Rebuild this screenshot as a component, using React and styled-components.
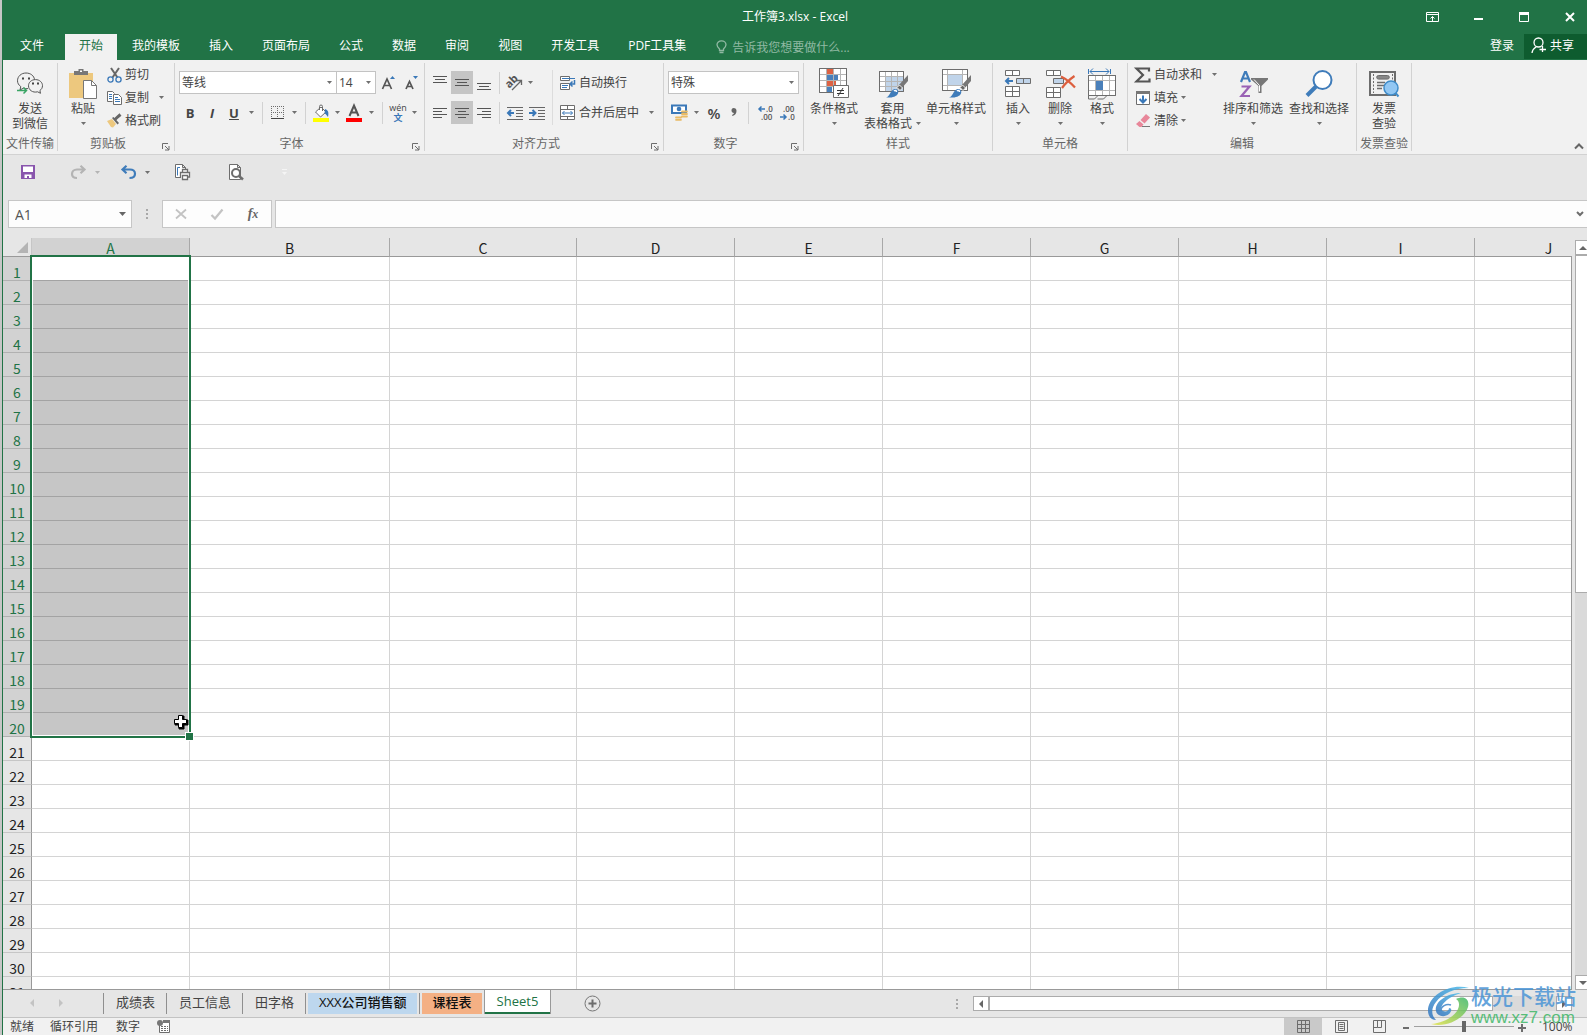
import styled, { createGlobalStyle } from "styled-components"

const GlobalStyle = createGlobalStyle`
  * {
    box-sizing: border-box;
  }
  body {
    margin: 0;
    font-family: "Open Sans", "Noto Sans CJK SC", sans-serif;
    font-size: 12px;
    color: #444;
    overflow: hidden;
  }
  button, select, input {
    font: inherit;
    color: inherit;
    border: 0;
    padding: 0;
    margin: 0;
    background: none;
    border-radius: 0;
  }
`

const Desktop = styled.div`
  height: 100vh;
  padding-left: 2px;
  background: #c6c6c6;
`

const Window = styled.div`
  position: relative;
  height: 100%;
  display: flex;
  flex-direction: column;
  overflow: hidden;
  background: #e6e6e6;
  border-left: 1px solid #217346;
`

/* title bar */

const TitleBar = styled.header`
  flex: none;
  height: 34px;
  display: grid;
  grid-template-columns: 1fr auto 1fr;
  align-items: center;
  background: #217346;
  color: #fff;
`

const Title = styled.h1`
  grid-column: 2;
  margin: 0;
  font-size: 12px;
  font-weight: 400;
  line-height: 34px;
`

const WindowButtons = styled.div`
  display: flex;
  justify-content: flex-end;
`

const WindowButton = styled.button`
  width: 46px;
  height: 32px;
  display: flex;
  align-items: center;
  justify-content: center;

  &:last-child {
    width: 40px;
    padding-left: 6px;
  }
`

/* tab strip */

const TabStrip = styled.nav`
  flex: none;
  height: 26px;
  display: flex;
  gap: 1px;
  background: #217346;
  color: #fff;
`

const Tab = styled.button`
  height: 26px;
  padding: 0 ${(p) => (p.$last ? 9 : 14)}px 2px 14px;
  line-height: 24px;
  white-space: nowrap;
  background: ${(p) => (p.$active ? "#f1f1f1" : "transparent")};
  color: ${(p) => (p.$active ? "#217346" : "#fff")};

  &:first-child {
    padding: 0 20px 2px 17px;
  }
`

const TellMe = styled.label`
  flex: 1;
  display: flex;
  align-items: center;
  gap: 5px;
  padding-left: 15px;

  input {
    width: 160px;
    height: 24px;
    outline: none;
  }
  input::placeholder {
    color: #90b9a3;
    opacity: 1;
  }
`

const Share = styled.button`
  height: 25px;
  padding: 0 13px 3px 7px;
  display: flex;
  align-items: center;
  gap: 4px;
  background: #0e5c2f;
  color: #fff;
`

/* ribbon */

const Ribbon = styled.div`
  flex: none;
  height: 95px;
  padding-top: 3px;
  display: flex;
  background: #f1f1f1;
  border-bottom: 1px solid #d2d2d2;
`

const GroupBox = styled.section`
  flex: none;
  width: ${(p) => p.$width}px;
  height: 88px;
  display: flex;
  flex-direction: column;
  border-right: 1px solid #d2d2d2;
`

const GroupBody = styled.div`
  height: 74px;
  display: flex;
  padding-left: ${(p) => p.$pad || 0}px;
`

const GroupLabel = styled.div`
  display: flex;
  line-height: 14px;
  color: #666;

  span {
    flex: 1;
    text-align: center;
    white-space: nowrap;
  }
`

const Launcher = styled.button`
  width: 16px;
  height: 14px;
  display: flex;
  align-items: flex-end;
  justify-content: center;
`

const BigButtonBox = styled.button`
  width: ${(p) => p.$width}px;
  padding-top: 3px;
  display: flex;
  flex-direction: column;
  align-items: center;
  line-height: 15px;
  white-space: nowrap;
`

const BigIcon = styled.span`
  height: 35px;
  display: flex;
  align-items: center;
`

const TextLine = styled.span`
  height: 15px;
  display: flex;
  align-items: center;
  gap: 4px;
`

const Stack = styled.div`
  display: flex;
  flex-direction: column;
`

const ToolRows = styled.div`
  display: flex;
  flex-direction: column;
  gap: 7px;
  padding-top: 8px;
`

const Row = styled.div`
  height: 23px;
  display: flex;
  align-items: center;
`

const SmallButton = styled.button`
  height: 23px;
  display: flex;
  align-items: center;
  gap: 3px;
  line-height: 22px;
  white-space: nowrap;
`

const ArrowButton = styled.button`
  width: ${(p) => p.$width || 12}px;
  height: 23px;
  margin-left: ${(p) => p.$gap || 0}px;
  display: flex;
  align-items: center;
  justify-content: center;
`

const Tool = styled.button`
  width: ${(p) => p.$width || 22}px;
  height: 23px;
  display: flex;
  align-items: center;
  justify-content: center;
  background: ${(p) => (p.$on ? "#c5c5c5" : "transparent")};
  font-size: ${(p) => p.$size || 13}px;
  font-weight: ${(p) => p.$weight || 700};
`

const Divider = styled.span`
  width: ${(p) => p.$width || 11}px;
  height: 22px;
  display: flex;
  justify-content: center;

  &::before {
    content: "";
    width: 1px;
    background: #d2d2d2;
  }
`

const AlignText = styled.div`
  height: 55px;
  margin: 7px 0 0 4px;
  padding: 1px 0 0 7px;
  display: flex;
  flex-direction: column;
  gap: 7px;
  border-left: 1px solid #dcdcdc;
`

const ComboBox = styled.span`
  position: relative;
  display: flex;
  width: ${(p) => p.$width}px;
  height: 23px;
  background: #fff;
  border: 1px solid #c3c3c3;

  & + & {
    border-left: 0;
  }
  select {
    flex: 1;
    padding-left: 2px;
    appearance: none;
    outline: none;
  }
  svg {
    position: absolute;
    right: 4px;
    top: 9px;
    pointer-events: none;
  }
`

const Pinyin = styled.span`
  display: flex;
  flex-direction: column;
  align-items: center;
  font-size: 9px;
  font-weight: 400;
  line-height: 10px;

  b {
    color: #3a78b8;
  }
`

const CollapseButton = styled.button`
  margin-left: auto;
  align-self: flex-end;
  width: 20px;
  height: 16px;
`

/* quick access toolbar and formula bar */

const QuickAccess = styled.div`
  flex: none;
  height: 34px;
  padding-left: 16px;
  display: flex;
  align-items: center;
`

const QuickButton = styled.button`
  height: 24px;
  min-width: ${(p) => p.$width}px;
  padding-left: 2px;
  display: flex;
  align-items: center;
  gap: 9px;
`

const FormulaBar = styled.div`
  flex: none;
  height: 28px;
  margin: 11px 0 10px;
  padding-left: 5px;
  display: flex;
  align-items: stretch;
  font-size: 14px;
`

const Field = styled.div`
  width: ${(p) => p.$width}px;
  flex: ${(p) => (p.$width ? "none" : 1)};
  display: flex;
  align-items: center;
  background: #fdfdfd;
  border: 1px solid #c6c6c6;
  border-right-width: ${(p) => (p.$width ? 1 : 0)}px;

  input {
    flex: 1;
    min-width: 0;
    padding-left: 6px;
    outline: none;
    color: #555;
  }
`

const FormulaButton = styled.button`
  flex: 1;
  height: 26px;
  display: flex;
  align-items: center;
  justify-content: center;
  font: italic bold 14px "Liberation Serif", serif;
  color: #666;

  small {
    font-size: 12px;
  }
`

const Dots = styled.span`
  width: ${(p) => p.$width}px;
  margin-left: ${(p) => (p.$push ? "auto" : 0)};
  display: flex;
  align-items: center;
  justify-content: center;
`

/* sheet */

const SheetArea = styled.main`
  flex: 1;
  min-height: 0;
  display: flex;
  gap: 3px;
`

const GridPane = styled.div`
  position: relative;
  flex: 1;
  min-width: 0;
  overflow: hidden;
  border-bottom: 1px solid #999;

  &::after {
    content: "";
    position: absolute;
    top: 18px;
    right: 0;
    bottom: 0;
    border-right: 1px solid #999;
  }
`

const Grid = styled.table`
  width: 1620px;
  table-layout: fixed;
  border-collapse: separate;
  border-spacing: 0;
  font-family: "Noto Sans CJK SC", sans-serif;
  font-size: 14px;
  color: #222;
  background: #fff;

  th {
    padding: 0;
    font-weight: 400;
    background: #e6e6e6;
  }
  td {
    height: 24px;
    padding: 0;
    border-right: 1px solid #d4d4d4;
    border-bottom: 1px solid #d4d4d4;
  }
`

const Corner = styled.th`
  height: 19px;
  border-right: 1px solid #c6c6c6;
  border-bottom: 1px solid #999;

  svg {
    margin-left: 14px;
  }
`

const ColHead = styled.th`
  height: 19px;
  line-height: 16px;
  border-right: 1px solid #a8a8a8;
  border-bottom: 1px solid #999;
  color: ${(p) => (p.$selected ? "#217346" : "#222")};

  && {
    padding-top: 2px;
    background: ${(p) => (p.$selected ? "#d2d2d2" : "#e6e6e6")};
  }
`

const RowHead = styled.th`
  height: 24px;
  line-height: 16px;
  vertical-align: bottom;
  border-right: 1px solid #999;
  border-bottom: 1px solid ${(p) => (p.$selected ? "#b1b1b1" : "#c6c6c6")};
  color: ${(p) => (p.$selected ? "#217346" : "#222")};

  && {
    background: ${(p) => (p.$selected ? "#d2d2d2" : "#e6e6e6")};
  }
`

const Cell = styled.td`
  background: ${(p) => (p.$selected ? "#c6c6c6" : "#fff")};

  && {
    border-bottom-color: ${(p) => (p.$ranged ? "#a3a3a3" : "#d4d4d4")};
  }
`

const Selection = styled.div`
  position: absolute;
  left: 27px;
  top: 17px;
  width: 161px;
  height: 483px;
  border: 2px solid #217346;
  box-shadow: inset 0 0 0 1px #fff;

  &::after {
    content: "";
    position: absolute;
    right: -5px;
    bottom: -5px;
    width: 7px;
    height: 7px;
    background: #217346;
    border: 1px solid #fff;
  }
  svg {
    position: absolute;
    right: 0;
    bottom: 6px;
    z-index: 1;
  }
`

const VerticalScroll = styled.div`
  flex: 0 0 12px;
  margin-top: 2px;
  display: flex;
  flex-direction: column;
  overflow: hidden;
  background: #dadada;
`

const ScrollButton = styled.button`
  flex: none;
  width: 16px;
  height: 15px;
  margin-top: ${(p) => (p.$bottom ? "auto" : 0)};
  display: flex;
  align-items: center;
  justify-content: center;
  background: #fff;
  border: 1px solid #ababab;
`

const VerticalThumb = styled.div`
  width: 16px;
  height: 45%;
  background: #fff;
  border: 1px solid #ababab;
`

/* sheet tabs and status bar */

const SheetBar = styled.footer`
  flex: none;
  height: 28px;
  display: flex;
  border-bottom: 1px solid #c3c3c3;
`

const SheetNav = styled.div`
  width: 100px;
  padding-left: 14px;
  display: flex;

  button {
    width: 29px;
    height: 26px;
    display: flex;
    align-items: center;
    justify-content: center;
  }
`

const SheetTab = styled.button`
  height: 21px;
  margin-top: 3px;
  padding: 0 11px 0 12px;
  display: flex;
  align-items: flex-start;
  line-height: 18px;
  font-size: 13px;
  white-space: nowrap;
  border-left: 1px solid #8f8f8f;
`

const ColorTab = styled(SheetTab)`
  padding: 0 2px;
  color: #111;
  font-weight: 500;

  span {
    display: block;
    height: 21px;
    padding: 0 10px 0 11px;
    background: ${(p) => p.$color};
  }
`

const ActiveTab = styled.button`
  height: 24px;
  padding: 0 12px 2px;
  line-height: 20px;
  font-size: 13px;
  color: #217346;
  background: #fff;
  border: solid #999;
  border-width: 0 1px;
  box-shadow: inset 0 -2px #217346;
`

const AddSheet = styled.button`
  margin-left: 33px;
  height: 26px;
  display: flex;
  align-items: center;
`

const HorizontalScroll = styled.div`
  width: 599px;
  height: 15px;
  margin: 6px 15px 0 0;
  display: flex;
  background: #dadada;
`

const HorizontalThumb = styled.div`
  width: 504px;
  margin-right: auto;
  background: #fff;
  border: 1px solid #ababab;
`

const StatusBar = styled.div`
  flex: none;
  height: 17px;
  padding-left: 7px;
  display: flex;
  align-items: center;
  background: #f1f1f1;
  line-height: 17px;
`

const StatusItem = styled.span`
  margin-right: ${(p) => p.$gap}px;
`

const ViewControls = styled.div`
  margin-left: auto;
  display: flex;
  align-items: center;
`

const ViewButton = styled.button`
  width: 38px;
  height: 17px;
  display: flex;
  align-items: center;
  justify-content: center;
  background: ${(p) => (p.$on ? "#c9c9c9" : "transparent")};
`

const ZoomButton = styled.button`
  width: 16px;
  height: 17px;
  display: flex;
  align-items: center;
  justify-content: center;
`

const ZoomSlider = styled.input`
  width: 100px;
  height: 12px;
  appearance: none;
  background: linear-gradient(#a0a0a0, #a0a0a0) center / 100% 1px no-repeat;

  &::-webkit-slider-thumb {
    appearance: none;
    width: 4px;
    height: 11px;
    background: #666;
  }
`

const ZoomValue = styled.span`
  width: 57px;
  padding-left: 12px;
`

const Watermark = styled.div`
  position: absolute;
  right: 11px;
  bottom: 8px;
  display: flex;
  align-items: center;
  gap: 2px;
  opacity: 0.85;
  pointer-events: none;

  p {
    margin: 0;
    font-size: 21px;
    font-weight: 500;
    line-height: 23px;
    color: #4b95d6;
  }
  p + p {
    font-family: "Liberation Sans", sans-serif;
    font-size: 17px;
    line-height: 19px;
    color: #3fb768;
  }
`

/* icons */

const Svg = styled.svg`
  display: block;
  flex: none;
  overflow: visible;
`

const Icon = ({ w = 16, h = 16, children }) => (
  <Svg width={w} height={h} viewBox={`0 0 ${w} ${h}`} fill="none" stroke="#6d6d6d" aria-hidden="true">
    {children}
  </Svg>
)

const Arrow = ({ color = "#707070" }) => (
  <Icon w={5} h={3}>
    <path d="M0 0h5L2.500 3z" fill={color} stroke="none" />
  </Icon>
)

const Lines = ({ rows, w = 14, h = 16 }) => (
  <Icon w={w} h={h}>
    {rows.map(([y, x1, x2]) => (
      <path key={y} d={`M${x1} ${y}.5H${x2}`} stroke="#555" />
    ))}
  </Icon>
)

const WeChatIcon = () => (
  <Icon w={28} h={26}>
    <path d="M12 17.6c-1.600 .3-3 .1-4.500-.5L4 19l.8-3.400C2.600 14 1.500 12 1.500 9.800 1.500 5.200 5.400 2 10 2s8 2.800 8.600 6.600" stroke="#555" />
    <path d="M19.500 8.600c4 0 7 2.700 7 6.100 0 2-1 3.700-2.600 4.800l.6 2.800-2.900-1.500c-5 1.300-9.100-1.900-9.100-6 0-3.500 3-6.200 7-6.200z" stroke="#555" />
    <path d="M6 7.500h2M12 7.500h2M16 12.500h2M21 12.500h2" stroke="#444" strokeWidth="2" />
    <path d="M1 19.500h9M7.500 16.500l3 3-3 3" stroke="#3aa565" strokeWidth="1.500" />
  </Icon>
)

const PasteIcon = () => (
  <Icon w={30} h={32}>
    <path d="M1 5h24v25H1z" fill="#edc87e" stroke="none" />
    <path d="M6 7V3h4.500V1h5v2H20v4z" fill="#777" stroke="none" />
    <path d="M12 2.500h2V4h-2z" fill="#fff" stroke="none" />
    <path d="M15.500 12.500h8l5 5v13h-13z" fill="#fff" stroke="#777" />
    <path d="M23.500 12.500v5h5" stroke="#777" />
  </Icon>
)

const CutIcon = () => (
  <Icon>
    <path d="M5 1l6.500 9.500M13 1L6.500 10.500" stroke="#666" strokeWidth="2" />
    <circle cx="4.500" cy="12.500" r="2.600" stroke="#3a78b8" strokeWidth="1.300" />
    <circle cx="12.500" cy="12.500" r="2.600" stroke="#3a78b8" strokeWidth="1.300" />
  </Icon>
)

const CopyIcon = () => (
  <Icon>
    <path d="M6.500 11.500h-5v-10h5l2 2" fill="#fff" />
    <path d="M3 4.500h3M3 6.500h3M3 8.500h3" stroke="#3a78b8" />
    <path d="M7.500 4.500h5l3 3v7h-8z" fill="#fff" />
    <path d="M9 7.500h3M9 9.500h5M9 11.500h5" stroke="#3a78b8" />
  </Icon>
)

const BrushIcon = () => (
  <Icon>
    <path d="M1 8l5-2 4 5-3 3.500L5 14z" fill="#edc87e" stroke="none" />
    <path d="M6 5l1.500-1 5.500 6-1.500 1.500z" fill="#666" stroke="none" />
    <path d="M9 6.500L11.500 4 14.500 1.500" stroke="#666" strokeWidth="3" />
  </Icon>
)

const BorderIcon = () => (
  <Icon w={14} h={14}>
    <path d="M.5 0v12M6.500 0v12M12.500 0v12M0 .5h13M0 6.500h13" strokeDasharray="1 1" />
    <path d="M0 12.500h13" stroke="#444" />
  </Icon>
)

const BucketIcon = () => (
  <Icon w={17} h={18}>
    <path d="M8 3l5 5-5.500 5L2.500 8z" fill="#fff" />
    <path d="M6.500 6V2.500a1.500 1.500 0 013 0V7" />
    <path d="M12 5c3 1 4 3 3 8-1-1.500-2-3-3.500-3.500z" fill="#3a78b8" stroke="none" />
    <path d="M0 14h16v4H0z" fill="#ffff00" stroke="none" />
  </Icon>
)

const FontColorIcon = () => (
  <Icon w={16} h={18}>
    <path d="M3.500 12L8 1.500 12.500 12M5 8.500h6" stroke="#555" strokeWidth="2" />
    <path d="M0 14h16v4H0z" fill="#ff0000" stroke="none" />
  </Icon>
)

const FontSizeIcon = ({ down }) => (
  <Icon w={14} h={16}>
    <path d={down ? "M2 14L5.500 6.500 9 14M3.500 11.500h4" : "M1.500 14L6 4l4.500 10M3 10.500h6"} stroke="#555" strokeWidth="1.700" />
    <path d={down ? "M9 1h5l-2.500 3z" : "M9 4h5l-2.500-3z"} fill="#3a78b8" stroke="none" />
  </Icon>
)

const OrientationIcon = () => (
  <Icon w={17}>
    <text x="0" y="10" transform="rotate(-45 6 8)" fontSize="11" fontWeight="700" fill="#555" stroke="none">ab</text>
    <path d="M6 15L15 6M11 5.500h4.500V10" stroke="#666" strokeWidth="1.300" />
  </Icon>
)

const IndentIcon = ({ right }) => (
  <Icon>
    <path d="M0 2.500h16M9 5.500h7M9 8.500h7M9 11.500h7M0 14.500h16" stroke="#666" />
    <path d={right ? "M0 8h6M3.500 5L6.500 8l-3 3" : "M1 8h6M4 5L1 8l3 3"} stroke="#3a78b8" strokeWidth="2" />
  </Icon>
)

const WrapIcon = () => (
  <Icon>
    <path d="M.5 1.500h9v4h-9zM.5 8.500h9v6h-9z" fill="#fff" />
    <path d="M2 3.500h13M2 10.500h6M2 12.500h5" stroke="#3a78b8" />
    <path d="M14.500 5v4h-4M12.500 6.500L10 9l2.500 2.500" stroke="#3a78b8" strokeWidth="1.500" />
  </Icon>
)

const MergeIcon = () => (
  <Icon>
    <path d="M.5 .5h14v14H.5zM.5 4.500h14M.5 11.500h14M7.500 .5v4M7.500 11.500v3" fill="#fff" />
    <path d="M2.500 8h10M4.500 6l-2 2 2 2M10.500 6l2 2-2 2" stroke="#3a78b8" />
  </Icon>
)

const MoneyIcon = () => (
  <Icon w={17} h={17}>
    <path d="M1 1.500h14v7.500H1z" fill="#fff" stroke="#3a78b8" strokeWidth="2" />
    <circle cx="8" cy="5" r="2.300" fill="#3a78b8" stroke="none" />
    <path d="M11 7.500h5M11 10h5M11 12.500h5M5 13.500h5M5 15.800h5" stroke="#e9bb66" strokeWidth="1.800" strokeLinecap="round" />
  </Icon>
)

const CommaIcon = () => (
  <Icon w={6} h={9}>
    <path d="M2.500 0C4.500 0 5.500 1.200 5.500 3c0 2.500-1.500 4.500-4 5l-.5-1c1.200-.5 1.800-1.200 2-2C1.500 5 .5 4 .5 2.500 .5 1 1.300 0 2.500 0z" fill="#666" stroke="none" />
  </Icon>
)

const DecimalIcon = ({ less }) => (
  <Icon>
    <text x={less ? 3 : 8} y="7" fontSize="8" fontWeight="600" fill="#555" stroke="none">{less ? ".00" : ".0"}</text>
    <text x={less ? 8 : 3} y="15" fontSize="8" fontWeight="600" fill="#555" stroke="none">{less ? ".0" : ".00"}</text>
    <path d={less ? "M0 12h6M3.500 9.500L6 12l-2.500 2.500" : "M1 4h6M3.500 1.500L1 4l2.500 2.500"} stroke="#3a78b8" strokeWidth="1.500" />
  </Icon>
)

const ConditionalIcon = () => (
  <Icon w={31} h={31}>
    <path d="M.5 .5h27v24H.5z" fill="#fff" />
    <path d="M8 1h6v5H8zM8 13h9v5H8z" fill="#dd6243" stroke="none" />
    <path d="M8 7h11v5H8zM8 19h5v5H8z" fill="#4a80ba" stroke="none" />
    <path d="M7.500 .5v24M14.500 .5v24M21.500 .5v24M.5 6.500h27M.5 12.500h27M.5 18.500h27" stroke="#b5b5b5" />
    <path d="M.5 .5h27v24H.5z" />
    <path d="M14.500 17.500h15v12h-15z" fill="#fff" />
    <path d="M18 22.500h7M18 25.500h7M24 20l-5 8" stroke="#333" />
  </Icon>
)

const PaintOverlay = () => (
  <>
    <path d="M29 6v6l-7 8-3-3z" fill="#777" stroke="none" />
    <path d="M20.500 16l3 3-2.500 2.500-3-3z" fill="#666" stroke="#f1f1f1" />
    <path d="M7 28.500c4-1 4-7 8.500-8.500 3-.5 4.500 2 3.500 4.500-1.500 3.500-7 4.500-12 4z" fill="#3f7cba" stroke="none" />
    <path d="M15 22c1-1 2.500-.5 2.500 1" stroke="#fff" strokeWidth="1.500" />
  </>
)

const TableFormatIcon = () => (
  <Icon w={28} h={30}>
    <path d="M.5 2.500h24v20H.5z" fill="#fff" />
    <path d="M6 7h18v15H6z" fill="#c0d4ea" stroke="none" />
    <path d="M6.500 2.500v20M12.500 2.500v20M18.500 2.500v20M.5 7.500h24M.5 12.500h24M.5 17.500h24" stroke="#b5b5b5" />
    <path d="M.5 2.500h24v20H.5z" />
    <PaintOverlay />
  </Icon>
)

const CellStyleIcon = () => (
  <Icon w={28} h={30}>
    <path d="M.5 .5h25v21H.5z" fill="#fff" />
    <path d="M5.500 .5v21M20.500 .5v21M.5 5.500h25M.5 16.500h25" stroke="#b5b5b5" />
    <path d="M6 6h14v10H6z" fill="#c0d4ea" stroke="none" />
    <path d="M.5 .5h25v21H.5z" />
    <PaintOverlay />
  </Icon>
)

const InsertIcon = () => (
  <Icon w={28} h={30}>
    <path d="M1.500 1.500h14v5h-14zM8.500 1.500v5M1.500 17.500h14v10h-14zM1.500 22.500h14M8.500 17.500v10" fill="#fff" />
    <path d="M12.500 9.500h14v5h-14zM19.500 9.500v5" fill="#c0d4ea" />
    <path d="M2 12h7M5 9l-3 3 3 3" stroke="#3a78b8" strokeWidth="2" />
  </Icon>
)

const DeleteIcon = () => (
  <Icon w={28} h={30}>
    <path d="M.5 1.500h14v5H.5zM7.500 1.500v5M.5 18.500h14v10H.5zM.5 23.500h14M7.500 18.500v10" fill="#fff" />
    <path d="M7.500 9.500h10v5h-10z" fill="#c0d4ea" />
    <path d="M15 7.500c5 2.500 9.500 6 14 11M28.500 7c-5 3.500-9 7-12.500 12" stroke="#dd5f3e" strokeWidth="2.200" />
  </Icon>
)

const FormatIcon = () => (
  <Icon w={30} h={32}>
    <path d="M1.500 1v5M23.500 1v5M3 3.500h19M6 .5l-3 3 3 3M19 .5l3 3-3 3" stroke="#3a78b8" />
    <path d="M1.500 7.500h27v20h-27z" fill="#fff" />
    <path d="M8.500 7.500v20M15.500 7.500v20M22.500 7.500v20M1.500 12.500h27M1.500 22.500h27" stroke="#b5b5b5" />
    <path d="M9 13h7v9H9z" fill="#4a80ba" stroke="none" />
    <path d="M1.500 7.500h27v20h-27zM1.500 28v3h6l3-3M10.500 31h6l3-3" />
  </Icon>
)

const SumIcon = () => (
  <Icon>
    <path d="M14 4.500V1.500H1.500L8 8l-6.500 6.500H14.500v-3" stroke="#555" strokeWidth="2.200" />
  </Icon>
)

const FillIcon = () => (
  <Icon>
    <path d="M1.500 1.500h13v13h-13z" fill="#fff" />
    <path d="M1 1h14v3H1z" fill="#777" stroke="none" />
    <path d="M8 5.500v7M4.500 9L8 12.500 11.500 9" stroke="#3a78b8" strokeWidth="2" />
  </Icon>
)

const EraserIcon = () => (
  <Icon>
    <path d="M5.500 7L11 1l4 3.500L9.500 10.500z" fill="#e8879a" stroke="none" />
    <path d="M4.500 8l4 3.500L6.500 14h-2L1 11z" fill="#e8879a" stroke="none" />
    <path d="M7 13.500h8" stroke="#777" />
  </Icon>
)

const SortIcon = () => (
  <Icon w={28} h={30}>
    <path d="M2 13L6 3h1l4 10M3.500 9.500h6" stroke="#3f7cba" strokeWidth="2.200" />
    <path d="M2.500 17.500h8L2.500 27h8.500" stroke="#9a62b5" strokeWidth="2.200" />
    <path d="M12 9h17v1.500L22.500 17v7h-3v-7L12 10.500z" fill="#777" stroke="none" />
    <path d="M15 10.500l5.500 6v6" stroke="#fff" />
  </Icon>
)

const FindIcon = () => (
  <Icon w={28} h={30}>
    <circle cx="17.500" cy="11" r="9" fill="#fff" stroke="#3f7cba" strokeWidth="2" />
    <path d="M11 17.500L2 26.500" stroke="#3f7cba" strokeWidth="4" />
  </Icon>
)

const InvoiceIcon = () => (
  <Icon w={32} h={28}>
    <path d="M2 2h25v23H2z" strokeWidth="2" />
    <path d="M5.500 4v19M24.500 4v8" strokeDasharray="2 1.500" />
    <path d="M9 12.500h8M9 15.500h8M9 18.500h5" strokeWidth="1.500" />
    <path d="M10.500 5.500h9a1.800 1.800 0 010 3.600h-9a1.800 1.800 0 010-3.600z" fill="#888" />
    <circle cx="23" cy="18" r="7" fill="#92c7f3" stroke="#3f8cc9" strokeWidth="1.500" />
    <path d="M27.500 23l3 3.500" stroke="#3f8cc9" strokeWidth="2" />
  </Icon>
)

const LauncherIcon = () => (
  <Icon w={8} h={8}>
    <path d="M.5 6V.5H6" />
    <path d="M3 3l4 4M7 3v4H3" />
  </Icon>
)

const SaveIcon = () => (
  <Icon w={14} h={14}>
    <path d="M0 0h14v14H0z" fill="#8955ad" stroke="none" />
    <path d="M2 1.500h10V7H2zM3.500 9.500h7V13H8v-2H6v2H3.500z" fill="#fff" stroke="none" />
  </Icon>
)

const TurnIcon = ({ redo }) => (
  <Icon w={15} h={14}>
    <path
      d={redo ? "M13 4.500H6C3 4.500 1 6.500 1 9s2 4 5 4M9.500 .8l4 3.700-4 3.700" : "M2 4.500h7c3 0 5 1.800 5 4.200S12 13 8.500 13M5.500 .8l-4 3.700 4 3.700"}
      stroke={redo ? "#b4b4b4" : "#3f7cba"}
      strokeWidth="2.200"
    />
  </Icon>
)

const PrintIcon = () => (
  <Icon w={17}>
    <path d="M7 13.500H1.500V.5h7l3 3V5M8.500 .5v3h3" fill="#fff" />
    <path d="M6 3.500H3.500v8" stroke="#3a78b8" />
    <path d="M8.500 8v-2.500h5V8M6.500 13V8.500h9V13h-2M8.500 11.500h5v4h-5z" fill="#fff" strokeWidth="1.300" />
  </Icon>
)

const PreviewIcon = () => (
  <Icon>
    <path d="M1.500 15.500V.5h8l3 3v12zM9.500 .5v3h3" fill="#fff" />
    <circle cx="8" cy="9" r="4" fill="#fff" strokeWidth="2" />
    <path d="M11 12l4 3.500" strokeWidth="2.500" />
  </Icon>
)

const DotsIcon = () => (
  <Icon w={2} h={10}>
    <path d="M0 0h2v2H0zM0 4h2v2H0zM0 8h2v2H0z" fill="#a8a8a8" stroke="none" />
  </Icon>
)

const ScrollArrow = ({ d, color = "#666" }) => (
  <Icon w={8} h={8}>
    <path d={d} fill={color} stroke="none" />
  </Icon>
)

const Swirl = () => (
  <Svg width="42" height="42" viewBox="0 0 42 42" aria-hidden="true">
    <defs>
      <linearGradient id="swirlBlue" x1="0" y1="1" x2="1" y2="0">
        <stop offset="0" stopColor="#3473bd" />
        <stop offset="1" stopColor="#4bbcec" />
      </linearGradient>
      <linearGradient id="swirlGreen" x1="0" y1="1" x2="1" y2="0">
        <stop offset="0" stopColor="#e6e34a" />
        <stop offset="1" stopColor="#3db769" />
      </linearGradient>
    </defs>
    <path d="M42 3C24-2 3 9 1 24c-.5 7 3 11 8 11-5-5-5-12 0-18C15 9 27 3 42 3z" fill="url(#swirlBlue)" />
    <path d="M34 8C20 8 7 17 9 26c1 5 8 7 13 3 3-3 3-6 0-6 0 3-3 4-6 3-5-3 2-13 18-18z" fill="url(#swirlBlue)" />
    <path d="M29 14c8-4 14 0 12 8C38 33 20 43 4 39c13-1 24-8 27-15 2-5 1-8-2-10z" fill="url(#swirlGreen)" />
    <path d="M24 20c-5-2-10 2-10 5" fill="none" stroke="#3d85ca" strokeWidth="1.500" />
  </Svg>
)

/* pieces */

const Group = ({ label, width, pad, launcher, children }) => (
  <GroupBox $width={width} aria-label={label}>
    <GroupBody $pad={pad}>{children}</GroupBody>
    <GroupLabel>
      <span>{label}</span>
      {launcher && (
        <Launcher aria-label={`${label}设置`}>
          <LauncherIcon />
        </Launcher>
      )}
    </GroupLabel>
  </GroupBox>
)

const BigButton = ({ icon, width, lines, arrow, inlineArrow }) => (
  <BigButtonBox $width={width}>
    <BigIcon>{icon}</BigIcon>
    {lines.map((line, i) => (
      <TextLine key={line}>
        {line}
        {inlineArrow && i === lines.length - 1 && <Arrow />}
      </TextLine>
    ))}
    {arrow && (
      <TextLine>
        <Arrow />
      </TextLine>
    )}
  </BigButtonBox>
)

const Drop = ({ label, gap }) => (
  <ArrowButton aria-label={label} $gap={gap}>
    <Arrow />
  </ArrowButton>
)

const Combo = ({ label, value, width }) => (
  <ComboBox $width={width}>
    <select aria-label={label} defaultValue={value}>
      <option>{value}</option>
    </select>
    <Arrow />
  </ComboBox>
)

const tabs = ["文件", "开始", "我的模板", "插入", "页面布局", "公式", "数据", "审阅", "视图", "开发工具", "PDF工具集"]

const columns = [
  ["A", 158],
  ["B", 200],
  ["C", 187],
  ["D", 158],
  ["E", 148],
  ["F", 148],
  ["G", 148],
  ["H", 148],
  ["I", 148],
  ["J", 148],
]

const rows = Array.from({ length: 31 }, (_, i) => i + 1)
const lastSelected = 20

const RibbonBar = () => (
  <Ribbon>
    <Group label="文件传输" width={55}>
      <BigButton width={54} icon={<WeChatIcon />} lines={["发送", "到微信"]} />
    </Group>

    <Group label="剪贴板" width={117} pad={2} launcher>
      <BigButton width={46} icon={<PasteIcon />} lines={["粘贴"]} arrow />
      <Stack>
        <SmallButton><CutIcon />剪切</SmallButton>
        <Row>
          <SmallButton><CopyIcon />复制</SmallButton>
          <Drop label="复制选项" gap={6} />
        </Row>
        <SmallButton><BrushIcon />格式刷</SmallButton>
      </Stack>
    </Group>

    <Group label="字体" width={250} pad={4} launcher>
      <ToolRows>
        <Row>
          <Combo label="字体" value="等线" width={158} />
          <Combo label="字号" value="14" width={39} />
          <Tool aria-label="增大字号" $width={24}><FontSizeIcon /></Tool>
          <Tool aria-label="减小字号"><FontSizeIcon down /></Tool>
        </Row>
        <Row>
          <Tool>B</Tool>
          <Tool><i>I</i></Tool>
          <Tool><u>U</u></Tool>
          <Drop label="下划线选项" />
          <Divider />
          <Tool aria-label="边框" $width={20}><BorderIcon /></Tool>
          <Drop label="边框选项" />
          <Divider />
          <Tool aria-label="填充颜色" $width={20}><BucketIcon /></Tool>
          <Drop label="填充颜色选项" />
          <Tool aria-label="字体颜色"><FontColorIcon /></Tool>
          <Drop label="字体颜色选项" />
          <Divider />
          <Tool $width={20}><Pinyin>wén<b>文</b></Pinyin></Tool>
          <Drop label="拼音选项" />
        </Row>
      </ToolRows>
    </Group>

    <Group label="对齐方式" width={239} pad={4} launcher>
      <ToolRows>
        <Row>
          <Tool aria-label="顶端对齐"><Lines rows={[[1, 0, 14], [4, 2, 12], [7, 0, 14]]} /></Tool>
          <Tool aria-label="垂直居中" $on><Lines rows={[[4, 0, 14], [7, 2, 12], [10, 0, 14]]} /></Tool>
          <Tool aria-label="底端对齐"><Lines rows={[[8, 0, 14], [11, 2, 12], [14, 0, 14]]} /></Tool>
          <Divider $width={9} />
          <Tool aria-label="方向" $width={20}><OrientationIcon /></Tool>
          <Drop label="方向选项" />
        </Row>
        <Row>
          <Tool aria-label="左对齐"><Lines rows={[[3, 0, 14], [6, 0, 9], [9, 0, 14], [12, 0, 9]]} /></Tool>
          <Tool aria-label="居中" $on><Lines rows={[[3, 0, 14], [6, 3, 11], [9, 0, 14], [12, 3, 11]]} /></Tool>
          <Tool aria-label="右对齐"><Lines rows={[[3, 0, 14], [6, 5, 14], [9, 0, 14], [12, 5, 14]]} /></Tool>
          <Divider $width={9} />
          <Tool aria-label="减少缩进量"><IndentIcon /></Tool>
          <Tool aria-label="增加缩进量"><IndentIcon right /></Tool>
        </Row>
      </ToolRows>
      <AlignText>
        <SmallButton><WrapIcon />自动换行</SmallButton>
        <Row>
          <SmallButton><MergeIcon />合并后居中</SmallButton>
          <Drop label="合并选项" gap={6} />
        </Row>
      </AlignText>
    </Group>

    <Group label="数字" width={140} pad={4} launcher>
      <ToolRows>
        <Row>
          <Combo label="数字格式" value="特殊" width={131} />
        </Row>
        <Row>
          <Tool aria-label="会计数字格式"><MoneyIcon /></Tool>
          <Drop label="货币选项" />
          <Tool $width={24} $size={15} $weight={600}>%</Tool>
          <Tool aria-label="千位分隔样式" $width={16}><CommaIcon /></Tool>
          <Divider $width={13} />
          <Tool aria-label="增加小数位数"><DecimalIcon /></Tool>
          <Tool aria-label="减少小数位数"><DecimalIcon less /></Tool>
        </Row>
      </ToolRows>
    </Group>

    <Group label="样式" width={189}>
      <BigButton width={60} icon={<ConditionalIcon />} lines={["条件格式"]} arrow />
      <BigButton width={57} icon={<TableFormatIcon />} lines={["套用", "表格格式"]} inlineArrow />
      <BigButton width={70} icon={<CellStyleIcon />} lines={["单元格样式"]} arrow />
    </Group>

    <Group label="单元格" width={135} pad={4}>
      <BigButton width={42} icon={<InsertIcon />} lines={["插入"]} arrow />
      <BigButton width={42} icon={<DeleteIcon />} lines={["删除"]} arrow />
      <BigButton width={42} icon={<FormatIcon />} lines={["格式"]} arrow />
    </Group>

    <Group label="编辑" width={229} pad={7}>
      <Stack>
        <Row>
          <SmallButton><SumIcon />自动求和</SmallButton>
          <Drop label="求和选项" gap={6} />
        </Row>
        <SmallButton><FillIcon />填充<Arrow /></SmallButton>
        <SmallButton><EraserIcon />清除<Arrow /></SmallButton>
      </Stack>
      <BigButton width={66} icon={<SortIcon />} lines={["排序和筛选"]} arrow />
      <BigButton width={66} icon={<FindIcon />} lines={["查找和选择"]} arrow />
    </Group>

    <Group label="发票查验" width={55}>
      <BigButton width={54} icon={<InvoiceIcon />} lines={["发票", "查验"]} />
    </Group>

    <CollapseButton aria-label="折叠功能区">
      <Icon w={16} h={7}>
        <path d="M8 5.500l4-4 4 4" stroke="#666" strokeWidth="2" />
      </Icon>
    </CollapseButton>
  </Ribbon>
)

const Sheet = () => (
  <SheetArea>
    <GridPane>
      <Grid>
        <colgroup>
          <col width="29" />
          {columns.map(([name, width]) => (
            <col key={name} width={width} />
          ))}
        </colgroup>
        <thead>
          <tr>
            <Corner aria-label="全选">
              <Icon w={11} h={11}>
                <path d="M11 0v11H0z" fill="#b4b4b4" stroke="none" />
              </Icon>
            </Corner>
            {columns.map(([name]) => (
              <ColHead key={name} scope="col" $selected={name === "A"}>{name}</ColHead>
            ))}
          </tr>
        </thead>
        <tbody>
          {rows.map((row) => (
            <tr key={row}>
              <RowHead scope="row" $selected={row <= lastSelected}>{row}</RowHead>
              {columns.map(([name]) => {
                const ranged = name === "A" && row <= lastSelected
                return <Cell key={name} $ranged={ranged} $selected={ranged && row > 1} />
              })}
            </tr>
          ))}
        </tbody>
      </Grid>
      <Selection>
        <Icon w={16} h={16}>
          <path d="M6 2h5v4h4v5h-4v4H6v-4H2V6h4z" fill="#000" stroke="#000" />
          <path d="M5.500 1.500h4v4h4v4h-4v4h-4v-4h-4v-4h4z" fill="#fff" stroke="#000" />
        </Icon>
      </Selection>
    </GridPane>
    <VerticalScroll>
      <ScrollButton aria-label="向上滚动"><ScrollArrow d="M0 6l4-4 4 4z" /></ScrollButton>
      <VerticalThumb />
      <ScrollButton aria-label="向下滚动" $bottom><ScrollArrow d="M0 2h8L4 6z" /></ScrollButton>
    </VerticalScroll>
  </SheetArea>
)

const App = () => {
  return (
    <Desktop>
      <GlobalStyle />
      <Window>
        <TitleBar>
          <Title>工作簿3.xlsx - Excel</Title>
          <WindowButtons>
            <WindowButton aria-label="功能区显示选项">
              <Icon w={13} h={10}>
                <path d="M.5 .5h12v9H.5zM.5 2.500h12M6.500 9V4.500M4.500 6.500l2-2 2 2" stroke="#fff" />
              </Icon>
            </WindowButton>
            <WindowButton aria-label="最小化">
              <Icon w={9} h={6}><path d="M0 5h9" stroke="#fff" strokeWidth="2" /></Icon>
            </WindowButton>
            <WindowButton aria-label="最大化">
              <Icon w={10} h={10}>
                <path d="M.5 1v8.500h9V1" stroke="#fff" />
                <path d="M0 1.500h10" stroke="#fff" strokeWidth="3" />
              </Icon>
            </WindowButton>
            <WindowButton aria-label="关闭">
              <Icon w={10} h={10}><path d="M1 1l8 8M9 1L1 9" stroke="#fff" strokeWidth="2" /></Icon>
            </WindowButton>
          </WindowButtons>
        </TitleBar>

        <TabStrip>
          {tabs.map((tab) => (
            <Tab key={tab} $active={tab === "开始"}>{tab}</Tab>
          ))}
          <TellMe>
            <Icon w={11} h={14}>
              <path d="M3.500 10.500V9C2 7.500 1 6.500 1 4.800 1 2.500 3 .8 5.500 .8S10 2.500 10 4.800C10 6.500 9 7.500 7.500 9v1.500zM3.500 12.500h4" stroke="#90b9a3" strokeWidth="1.300" />
            </Icon>
            <input aria-label="告诉我您想要做什么" placeholder="告诉我您想要做什么..." />
          </TellMe>
          <Tab $last>登录</Tab>
          <Share>
            <Icon w={15} h={17}>
              <circle cx="7.500" cy="5.500" r="4.500" stroke="#fff" strokeWidth="1.300" />
              <path d="M1 16c.3-3 1.500-4.500 4-6M11.500 9v6M8.500 12.500h6.500" stroke="#fff" strokeWidth="1.300" />
            </Icon>
            共享
          </Share>
        </TabStrip>

        <RibbonBar />

        <QuickAccess>
          <QuickButton aria-label="保存" $width={50}><SaveIcon /></QuickButton>
          <QuickButton aria-label="恢复" $width={50}><TurnIcon redo /><Arrow color="#b4b4b4" /></QuickButton>
          <QuickButton aria-label="撤消" $width={53}><TurnIcon /><Arrow /></QuickButton>
          <QuickButton aria-label="打印" $width={54}><PrintIcon /></QuickButton>
          <QuickButton aria-label="打印预览" $width={54}><PreviewIcon /></QuickButton>
          <QuickButton aria-label="自定义快速访问工具栏" $width={20}>
            <Icon w={5} h={6}>
              <path d="M0 .5h5" stroke="#f5f5f5" />
              <path d="M0 3h5L2.500 6z" fill="#f5f5f5" stroke="none" />
            </Icon>
          </QuickButton>
        </QuickAccess>

        <FormulaBar>
          <Field $width={124}>
            <input aria-label="名称框" defaultValue="A1" />
            <ArrowButton aria-label="名称列表" $width={18}>
              <Icon w={7} h={4}><path d="M0 0h7L3.500 4z" fill="#666" stroke="none" /></Icon>
            </ArrowButton>
          </Field>
          <Dots $width={30}><DotsIcon /></Dots>
          <Field $width={110}>
            <FormulaButton aria-label="取消">
              <Icon w={12} h={12}><path d="M1 1.500l10 9M11 1.500l-10 9" stroke="#c3c3c3" strokeWidth="1.800" /></Icon>
            </FormulaButton>
            <FormulaButton aria-label="输入">
              <Icon w={12} h={12}><path d="M.5 7L4 10.500 11.500 1.500" stroke="#c3c3c3" strokeWidth="2.200" /></Icon>
            </FormulaButton>
            <FormulaButton>f<small>x</small></FormulaButton>
          </Field>
          <Dots $width={3} />
          <Field>
            <input aria-label="编辑栏" />
            <ArrowButton aria-label="展开编辑栏" $width={15}>
              <Icon w={8} h={6}><path d="M1 1l3 3 3-3" strokeWidth="2" /></Icon>
            </ArrowButton>
          </Field>
        </FormulaBar>

        <Sheet />

        <SheetBar>
          <SheetNav>
            <button aria-label="上一张"><ScrollArrow color="#c3c3c3" d="M6 0v8L2 4z" /></button>
            <button aria-label="下一张"><ScrollArrow color="#c3c3c3" d="M2 0v8l4-4z" /></button>
          </SheetNav>
          <SheetTab>成绩表</SheetTab>
          <SheetTab>员工信息</SheetTab>
          <SheetTab>田字格</SheetTab>
          <ColorTab $color="#bdd7ee"><span>XXX公司销售额</span></ColorTab>
          <ColorTab $color="#f4b084"><span>课程表</span></ColorTab>
          <ActiveTab>Sheet5</ActiveTab>
          <AddSheet aria-label="新工作表">
            <Icon w={17} h={17}>
              <circle cx="8.500" cy="8.500" r="7.500" stroke="#777" />
              <path d="M4.500 8.500h8M8.500 4.500v8" strokeWidth="2" />
            </Icon>
          </AddSheet>
          <Dots $width={32} $push><DotsIcon /></Dots>
          <HorizontalScroll>
            <ScrollButton aria-label="向左滚动"><ScrollArrow d="M6 0v8L2 4z" /></ScrollButton>
            <HorizontalThumb />
            <ScrollButton aria-label="向右滚动"><ScrollArrow d="M2 0v8l4-4z" /></ScrollButton>
          </HorizontalScroll>
        </SheetBar>

        <StatusBar>
          <StatusItem $gap={16}>就绪</StatusItem>
          <StatusItem $gap={18}>循环引用</StatusItem>
          <StatusItem $gap={17}>数字</StatusItem>
          <Icon w={14} h={13}>
            <path d="M2.500 4v8.500h10V1H6" fill="#fff" />
            <path d="M6 0h7v3H6z" fill="#777" stroke="none" />
            <circle cx="3" cy="3" r="3" fill="#777" stroke="none" />
            <path d="M4 6.500h7M4 8.500h7M4 10.500h7" strokeDasharray="2 1" />
          </Icon>
          <ViewControls>
            <ViewButton aria-label="普通" $on>
              <Icon w={13} h={13}><path d="M.5 .5h12v12H.5zM4.500 .5v12M8.500 .5v12M.5 4.500h12M.5 8.500h12" /></Icon>
            </ViewButton>
            <ViewButton aria-label="页面布局">
              <Icon w={13} h={13}><path d="M.5 .5h12v12H.5zM3.500 2.500h6v8h-6zM4.500 4.500h4M4.500 6.500h4M4.500 8.500h4" /></Icon>
            </ViewButton>
            <ViewButton aria-label="分页预览">
              <Icon w={13} h={13}><path d="M.5 .5h12v12H.5zM4.500 .5v7h-4M4.500 7.500h4v-7" /></Icon>
            </ViewButton>
            <ZoomButton aria-label="缩小">
              <Icon w={8} h={8}><path d="M1 5h6" strokeWidth="2" /></Icon>
            </ZoomButton>
            <ZoomSlider type="range" aria-label="缩放" min="0" max="100" defaultValue="50" />
            <ZoomButton aria-label="放大">
              <Icon w={8} h={8}><path d="M0 5h8M4 1v8" strokeWidth="2" /></Icon>
            </ZoomButton>
            <ZoomValue>100%</ZoomValue>
          </ViewControls>
        </StatusBar>

        <Watermark>
          <Swirl />
          <div>
            <p>极光下载站</p>
            <p>www.xz7.com</p>
          </div>
        </Watermark>
      </Window>
    </Desktop>
  )
}

export default App
